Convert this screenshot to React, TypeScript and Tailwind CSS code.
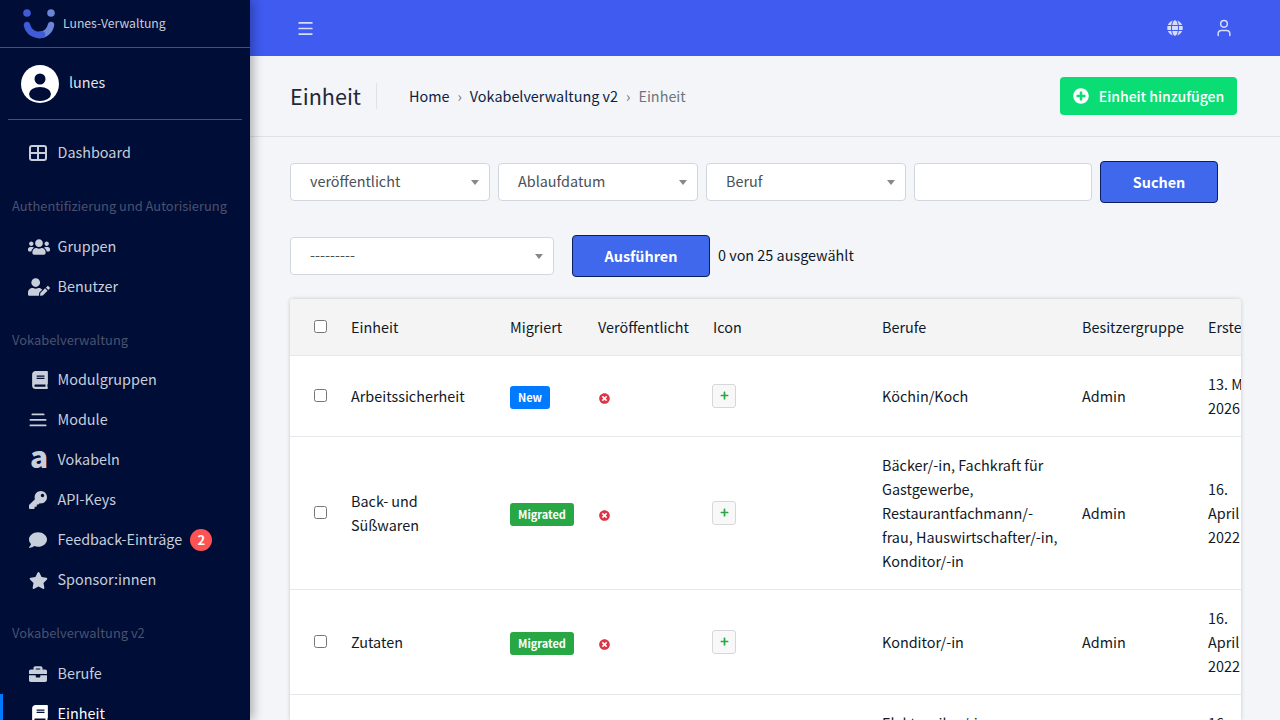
import type { ReactNode } from "react";
import {
  FaBook,
  FaBriefcase,
  FaComment,
  FaGlobe,
  FaKey,
  FaPlus,
  FaPlusCircle,
  FaStar,
  FaTimesCircle,
  FaUserEdit,
  FaUsers,
} from "react-icons/fa";
import { Menu, User } from "lucide-react";

function Logo() {
  return (
    <svg viewBox="0 0 32 30" className="h-[30px] w-[32px]">
      <circle cx="4" cy="4" r="3.8" fill="#3f5bd8" />
      <circle cx="28" cy="4" r="3.8" fill="#6b86d6" />
      <path d="M28 16 A12 12 0 0 1 16 26" fill="none" stroke="#6b86d6" strokeWidth="6.5" strokeLinecap="round" />
      <path d="M4 16 A12 12 0 0 0 19 25.5" fill="none" stroke="#3f5bd8" strokeWidth="6.5" strokeLinecap="round" />
    </svg>
  );
}

function Avatar() {
  return (
    <svg viewBox="0 0 38 38" className="h-[38px] w-[38px]">
      <defs>
        <clipPath id="avatar-clip">
          <circle cx="19" cy="19" r="19" />
        </clipPath>
      </defs>
      <circle cx="19" cy="19" r="19" fill="#fff" />
      <circle cx="19" cy="14" r="5.5" fill="#000d36" />
      <ellipse cx="19" cy="29" rx="11" ry="7" fill="#000d36" clipPath="url(#avatar-clip)" />
    </svg>
  );
}

function DashboardIcon() {
  return (
    <svg viewBox="0 0 18 16" className="h-[16px] w-[18px]" fill="none" stroke="currentColor" strokeWidth="2">
      <rect x="1" y="1" width="16" height="14" rx="2" />
      <path d="M1 8h16M9 1v14" />
    </svg>
  );
}

function ModuleIcon() {
  return (
    <svg viewBox="0 0 18 14" className="h-[14px] w-[18px]" fill="currentColor">
      <rect x="2.5" y="0.5" width="13" height="1.8" rx="0.9" />
      <rect x="0.5" y="6" width="17" height="1.8" rx="0.9" />
      <rect x="0.5" y="11.5" width="17" height="1.8" rx="0.9" />
    </svg>
  );
}

function NavItem({
  icon,
  label,
  active,
  badge,
}: {
  icon: ReactNode;
  label: string;
  active?: boolean;
  badge?: string;
}) {
  return (
    <div
      className={`flex h-10 items-center border-l-[3px] pl-[26px] text-[14.4px] ${
        active ? "border-[#007bff] text-white" : "border-transparent text-[#c8ceda]"
      }`}
    >
      <span className="flex w-[28.5px] shrink-0 items-center text-[18px]">{icon}</span>
      <span className="-translate-y-px">{label}</span>
      {badge && (
        <span className="ml-2 flex h-[22px] w-[22px] items-center justify-center rounded-full bg-[#ff5252] text-[13px] font-semibold text-white">
          {badge}
        </span>
      )}
    </div>
  );
}

function NavHeading({ children }: { children: ReactNode }) {
  return <div className="pl-3 text-[12.9px] leading-5 text-[#49526f]">{children}</div>;
}

function Sidebar() {
  return (
    <aside className="relative z-10 h-full w-[250px] shrink-0 overflow-hidden bg-[#000d36] shadow-[3px_0_10px_rgba(0,0,0,0.3)]">
      <div className="flex h-[48px] items-start border-b border-[#4a5068] pl-[23px] pt-[9px]">
        <Logo />
        <span className="ml-2 mt-[4px] text-[12.2px] leading-5 text-[#c8ceda]">Lunes-Verwaltung</span>
      </div>
      <div className="mx-2 flex h-[72px] items-center border-b border-[#4a5068] pl-[13px]">
        <Avatar />
        <span className="ml-[10px] -translate-y-[2px] text-[14.4px] text-[#dfe2ea]">lunes</span>
      </div>
      <div className="pt-[13px]">
        <NavItem icon={<DashboardIcon />} label="Dashboard" />
      </div>
      <div className="pt-[23px] pb-[11px]">
        <NavHeading>Authentifizierung und Autorisierung</NavHeading>
      </div>
      <NavItem icon={<FaUsers className="-ml-px text-[22px]" />} label="Gruppen" />
      <NavItem icon={<FaUserEdit className="-ml-px text-[22px]" />} label="Benutzer" />
      <div className="pt-[23px] pb-[10px]">
        <NavHeading>Vokabelverwaltung</NavHeading>
      </div>
      <NavItem icon={<FaBook className="ml-[2px]" />} label="Modulgruppen" />
      <NavItem icon={<ModuleIcon />} label="Module" />
      <NavItem
        icon={<span className="ml-px -translate-y-[5px] text-[30px] font-black leading-[18px]">a</span>}
        label="Vokabeln"
      />
      <NavItem icon={<FaKey />} label="API-Keys" />
      <NavItem icon={<FaComment />} label="Feedback-Einträge" badge="2" />
      <NavItem icon={<FaStar className="text-[19px]" />} label="Sponsor:innen" />
      <div className="pt-[23px] pb-[11px]">
        <NavHeading>Vokabelverwaltung v2</NavHeading>
      </div>
      <NavItem icon={<FaBriefcase />} label="Berufe" />
      <NavItem icon={<FaBook className="ml-[2px] text-white" />} label="Einheit" active />
    </aside>
  );
}

function Topbar() {
  return (
    <header className="flex h-14 shrink-0 items-center bg-[#3f5bf0] pl-[46px] pr-[46px] text-[#d6dcfb]">
      <Menu className="h-[19px] w-[19px]" strokeWidth={2.2} />
      <FaGlobe className="ml-auto h-4 w-4" />
      <User className="ml-[31px] h-5 w-5" strokeWidth={1.8} />
    </header>
  );
}

function PageHeader() {
  return (
    <div className="flex h-[81px] shrink-0 items-center border-b border-[#dee1e8] pl-10 pr-[43px]">
      <h1 className="text-[21.6px] leading-[26px] text-[#1f2937]">Einheit</h1>
      <div className="ml-[15px] h-[26px] w-px bg-[#dee1e8]" />
      <nav className="ml-8 flex items-center text-[14.4px] text-[#0a1f44]">
        <span>Home</span>
        <span className="mx-2 text-[#6c757d]">›</span>
        <span>Vokabelverwaltung v2</span>
        <span className="mx-2 text-[#6c757d]">›</span>
        <span className="text-[#6c757d]">Einheit</span>
      </nav>
      <button className="ml-auto flex h-[38px] w-[177px] items-center justify-center gap-[10px] rounded bg-[#0bdd75] text-[14px] font-medium text-white">
        <FaPlusCircle className="h-4 w-4" />
        Einheit hinzufügen
      </button>
    </div>
  );
}

function SelectBox({ label, width }: { label: string; width: string }) {
  return (
    <div className={`flex h-[38px] shrink-0 items-center justify-between rounded border border-[#d3d6de] bg-white pl-[19px] pr-[10px] text-[14.4px] text-[#495057] ${width}`}>
      <span className="-translate-y-px">{label}</span>
      <span className="h-0 w-0 border-x-[4px] border-t-[5px] border-x-transparent border-t-[#888]" />
    </div>
  );
}

function Filters() {
  return (
    <div className="shrink-0 pl-10">
      <div className="mt-6 flex h-[42px] items-center gap-2">
        <SelectBox label="veröffentlicht" width="w-[200px]" />
        <SelectBox label="Ablaufdatum" width="w-[200px]" />
        <SelectBox label="Beruf" width="w-[200px]" />
        <div className="h-[38px] w-[178px] rounded border border-[#d3d6de] bg-white" />
        <button className="h-[42px] w-[118px] rounded border border-[#0a1f5c] bg-[#3f68ec] text-[14.4px] font-bold text-white">
          Suchen
        </button>
      </div>
      <div className="mt-8 flex h-[42px] items-center">
        <SelectBox label="---------" width="w-[264px]" />
        <button className="ml-[18px] h-[42px] w-[138px] rounded border border-[#0a1f5c] bg-[#3f68ec] text-[14.4px] font-bold text-white">
          Ausführen
        </button>
        <span className="ml-2 -translate-y-px text-[14.4px] text-[#111827]">0 von 25 ausgewählt</span>
      </div>
    </div>
  );
}

interface Row {
  name: string;
  migrated: "New" | "Migrated";
  jobs: string;
  date: string;
}

const rows: Row[] = [
  { name: "Arbeitssicherheit", migrated: "New", jobs: "Köchin/Koch", date: "13. Mai 2026" },
  {
    name: "Back- und Süßwaren",
    migrated: "Migrated",
    jobs: "Bäcker/-in, Fachkraft für Gastgewerbe, Restaurantfachmann/-frau, Hauswirtschafter/-in, Konditor/-in",
    date: "16. April 2022",
  },
  { name: "Zutaten", migrated: "Migrated", jobs: "Konditor/-in", date: "16. April 2022" },
  {
    name: "Elektrik",
    migrated: "Migrated",
    jobs: "Elektroniker/-in, Elektroniker/-in für Betriebstechnik",
    date: "16. April 2022",
  },
];

function UnitTable() {
  return (
    <div className="mt-[22px] ml-10 w-[951px] overflow-hidden rounded-t bg-white shadow-[0_0_4px_rgba(0,0,0,0.18)]">
      <table className="w-[978px] table-fixed border-collapse text-left text-[14.4px] leading-6 text-[#111827]">
        <colgroup>
          <col className="w-[49px]" />
          <col className="w-[159px]" />
          <col className="w-[88px]" />
          <col className="w-[115px]" />
          <col className="w-[169px]" />
          <col className="w-[200px]" />
          <col className="w-[126px]" />
          <col className="w-[72px]" />
        </colgroup>
        <thead>
          <tr className="h-[56px] border-b border-[#e7e8ec] bg-[#f4f4f5]">
            <th className="pl-6 font-normal">
              <input type="checkbox" className="block" />
            </th>
            <th className="px-3 font-normal">Einheit</th>
            <th className="px-3 font-normal">Migriert</th>
            <th className="px-3 font-normal">Veröffentlicht</th>
            <th className="px-3 font-normal">Icon</th>
            <th className="px-3 font-normal">Berufe</th>
            <th className="px-3 font-normal">Besitzergruppe</th>
            <th className="px-3 font-normal whitespace-nowrap">Erstellungsdatum</th>
          </tr>
        </thead>
        <tbody>
          {rows.map((row) => (
            <tr key={row.name} className="border-b border-[#e7e8ec]">
              <td className="py-4 pl-6 align-middle">
                <input type="checkbox" className="block" />
              </td>
              <td className="px-3 py-4 align-middle">{row.name}</td>
              <td className="px-3 py-4 align-middle">
                <span
                  className={`inline-flex h-[23px] translate-y-px items-center rounded-[3px] px-2 text-[11px] font-semibold text-white ${
                    row.migrated === "New" ? "bg-[#007bff]" : "bg-[#28a745]"
                  }`}
                >
                  {row.migrated}
                </span>
              </td>
              <td className="px-3 py-4 align-middle">
                <FaTimesCircle className="ml-px mt-[6px] h-[11px] w-[11px] text-[#dc3545]" />
              </td>
              <td className="px-3 py-4 align-middle">
                <span className="-ml-px flex h-6 w-6 items-center justify-center rounded-[3px] border border-[#d5d7da] bg-[#f8f8f8] text-[#28a745]">
                  <FaPlus className="h-[9px] w-[9px]" />
                </span>
              </td>
              <td className="px-3 py-4 align-middle">{row.jobs}</td>
              <td className="px-3 py-4 align-middle">Admin</td>
              <td className="px-3 py-4 align-middle">{row.date}</td>
            </tr>
          ))}
        </tbody>
      </table>
    </div>
  );
}

export default function App() {
  return (
    <div className="flex h-[720px] w-[1280px] overflow-hidden bg-[#f4f5f9] font-['Noto_Sans_CJK_SC','Noto_Sans',sans-serif]">
      <Sidebar />
      <main className="flex min-w-0 flex-1 flex-col overflow-hidden">
        <Topbar />
        <PageHeader />
        <Filters />
        <UnitTable />
      </main>
    </div>
  );
}
